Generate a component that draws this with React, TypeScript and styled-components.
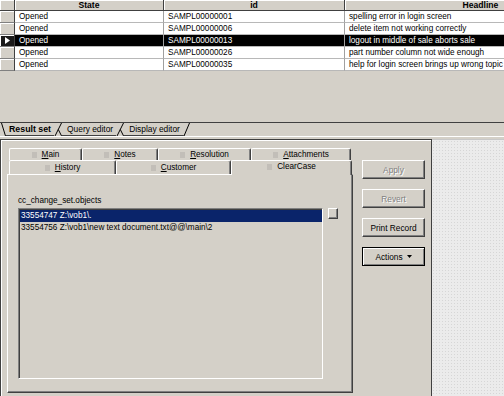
import React from 'react';
import styled, { createGlobalStyle, css } from 'styled-components';

const FACE = '#d4d0c8';
const LIGHT = '#ffffff';
const SHADOW = '#808080';
const DARK = '#404040';
const NAVY = '#0a246a';

const GlobalStyle = createGlobalStyle`
  html, body { margin: 0; padding: 0; background: ${FACE}; }
  body { font-family: "Liberation Sans", Arial, sans-serif; font-size: 8.2px; color: #000; }
  * { box-sizing: border-box; }
`;

const Window = styled.div`
  width: 504px;
  height: 396px;
  overflow: hidden;
  display: flex;
  flex-direction: column;
  background: ${FACE};
`;

/* ---------- result grid ---------- */
const GridArea = styled.div`
  height: 122px;
  overflow: hidden;
  background: ${FACE};
`;

const Grid = styled.div`
  display: grid;
  grid-template-columns: 15px 149px 181px 272px;
  grid-template-rows: 11px repeat(5, 12px);
  width: max-content;
`;

const HeaderCell = styled.div`
  background: ${FACE};
  font-weight: bold;
  font-size: 8.6px;
  text-align: center;
  line-height: 10px;
  border-right: 1px solid ${DARK};
  border-bottom: 1px solid ${DARK};
  box-shadow: inset 1px 1px 0 ${LIGHT};
  white-space: nowrap;
  overflow: hidden;
`;

const SelectorCell = styled.div<{ $current?: boolean }>`
  display: flex;
  align-items: center;
  justify-content: center;
  background: ${(p) => (p.$current ? '#1a1a1a' : FACE)};
  border-right: 1px solid ${DARK};
  border-bottom: 1px solid ${SHADOW};
  box-shadow: inset 1px 1px 0 ${LIGHT};
`;

const DataCell = styled.div<{ $selected?: boolean }>`
  background: ${(p) => (p.$selected ? '#000' : LIGHT)};
  color: ${(p) => (p.$selected ? LIGHT : '#000')};
  padding-left: 4px;
  line-height: 11px;
  border-right: 1px solid #a0a0a0;
  border-bottom: 1px solid #b8b8b8;
  white-space: nowrap;
  overflow: hidden;
`;

/* ---------- sheet tabs ---------- */
const SheetStrip = styled.div`
  height: 14px;
  border-top: 1px solid ${DARK};
  display: flex;
  padding-left: 1px;
`;

const SheetTab = styled.div<{ $active?: boolean }>`
  height: 13px;
  display: flex;
  align-items: center;
  padding: 0 3px 0 3px;
  border-bottom: 1px solid ${DARK};
  font-weight: ${(p) => (p.$active ? 'bold' : 'normal')};
  font-size: ${(p) => (p.$active ? '8.8px' : '8.4px')};
  white-space: nowrap;
`;

const StripBottom = styled.div`
  height: 3px;
  border-top: 1px solid ${LIGHT};
`;

const Edge = ({ kind }: { kind: 'start' | 'joint' | 'end' }) => {
  if (kind === 'start')
    return (
      <svg width="5" height="13" viewBox="0 0 5 13">
        <line x1="0.5" y1="0" x2="4.5" y2="13" stroke="#000" strokeWidth="1" />
      </svg>
    );
  if (kind === 'end')
    return (
      <svg width="8" height="13" viewBox="0 0 8 13">
        <line x1="0.5" y1="12.5" x2="0" y2="12.5" stroke="#000" />
        <line x1="1" y1="13" x2="6.5" y2="0" stroke="#000" strokeWidth="1" />
      </svg>
    );
  return (
    <svg width="10" height="13" viewBox="0 0 10 13">
      <line x1="1" y1="13" x2="7.5" y2="0" stroke="#000" strokeWidth="1" />
      <line x1="4.3" y1="6.5" x2="7.6" y2="13" stroke="#000" strokeWidth="1" />
      <line x1="7.6" y1="12.5" x2="10" y2="12.5" stroke={DARK} strokeWidth="1" />
    </svg>
  );
};

/* ---------- bottom area ---------- */
const BottomArea = styled.div`
  flex: 1;
  display: flex;
  min-height: 0;
`;

const FormPanel = styled.div`
  width: 432px;
  display: flex;
  padding: 8px 0 3px 6px;
  border-top: 1px solid ${DARK};
  border-left: 1px solid ${DARK};
  border-right: 1px solid ${DARK};
  box-shadow: inset 1px 1px 0 ${LIGHT};
`;

const DottedPanel = styled.div`
  flex: 1;
  border-top: 1px solid #c8c8c8;
  background-color: #ebebeb;
  background-image: radial-gradient(circle, #d6d6d6 0.7px, transparent 0.9px);
  background-size: 3px 3px;
`;

const TabControl = styled.div`
  width: 346px;
  display: flex;
  flex-direction: column;
`;

const TabRow = styled.div<{ $h: number }>`
  height: ${(p) => p.$h}px;
  display: flex;
  padding-left: 2px;
`;

const Tab = styled.div<{ $w: number; $selected?: boolean }>`
  width: ${(p) => p.$w}px;
  display: flex;
  align-items: center;
  justify-content: center;
  gap: 5px;
  background: ${FACE};
  border-top: 1px solid ${LIGHT};
  border-left: 1px solid ${LIGHT};
  border-right: 1px solid ${DARK};
  box-shadow: inset -1px 0 0 ${SHADOW};
  border-radius: 2px 2px 0 0;
  white-space: nowrap;
  ${(p) =>
    p.$selected &&
    css`
      position: relative;
      z-index: 1;
      margin-bottom: -1px;
      padding-bottom: 3px;
    `}
`;

const TabIcon = styled.span`
  width: 5px;
  height: 6px;
  background: #c2beb8;
  flex: none;
`;

const TabPage = styled.div`
  flex: 1;
  border-top: 1px solid ${LIGHT};
  border-left: 1px solid ${LIGHT};
  border-right: 1px solid ${DARK};
  border-bottom: 1px solid ${DARK};
  box-shadow: inset -1px -1px 0 ${SHADOW};
  padding: 20px 0 0 10px;
  display: flex;
  flex-direction: column;
`;

const FieldLabel = styled.div`
  height: 11px;
  line-height: 11px;
  white-space: nowrap;
`;

const FieldRow = styled.div`
  margin-top: 2px;
  display: flex;
  align-items: flex-start;
  gap: 5px;
`;

const ListBox = styled.div`
  width: 305px;
  height: 171px;
  border: 1px solid;
  border-color: ${SHADOW} ${LIGHT} ${LIGHT} ${SHADOW};
  box-shadow: inset 1px 1px 0 ${DARK};
  padding: 1px 0 0 1px;
  background: ${FACE};
`;

const ListItem = styled.div<{ $selected?: boolean }>`
  height: 12px;
  line-height: 12px;
  padding-left: 1px;
  white-space: nowrap;
  background: ${(p) => (p.$selected ? NAVY : 'transparent')};
  color: ${(p) => (p.$selected ? LIGHT : '#000')};
`;

const MiniButton = styled.div`
  width: 10px;
  height: 11px;
  background: ${FACE};
  border: 1px solid;
  border-color: ${LIGHT} ${DARK} ${DARK} ${LIGHT};
  box-shadow: inset -1px -1px 0 ${SHADOW};
`;

const ButtonColumn = styled.div`
  display: flex;
  flex-direction: column;
  gap: 10px;
  padding: 12px 0 0 9px;
`;

const Button = styled.div<{ $disabled?: boolean; $default?: boolean }>`
  width: 63px;
  height: 19px;
  display: flex;
  align-items: center;
  justify-content: center;
  gap: 4px;
  background: ${FACE};
  border: 1px solid;
  border-color: ${LIGHT} ${DARK} ${DARK} ${LIGHT};
  box-shadow: inset -1px -1px 0 ${SHADOW};
  font-size: 8.3px;
  white-space: nowrap;
  color: ${(p) => (p.$disabled ? SHADOW : '#000')};
  text-shadow: ${(p) => (p.$disabled ? `1px 1px 0 ${LIGHT}` : 'none')};
  ${(p) =>
    p.$default &&
    css`
      outline: 1px solid #000;
      outline-offset: -1px;
      border-color: #000;
      box-shadow: inset 1px 1px 0 ${LIGHT}, inset -1px -1px 0 ${SHADOW};
    `}
`;

const rows = [
  { id: 'SAMPL00000001', headline: 'spelling error in login screen' },
  { id: 'SAMPL00000006', headline: 'delete item not working correctly' },
  { id: 'SAMPL00000013', headline: 'logout in middle of sale aborts sale', selected: true },
  { id: 'SAMPL00000026', headline: 'part number column not wide enough' },
  { id: 'SAMPL00000035', headline: 'help for login screen brings up wrong topic' },
];

const Mn = ({ text, u = true }: { text: string; u?: boolean }) =>
  u ? (
    <span>
      <u>{text[0]}</u>
      {text.slice(1)}
    </span>
  ) : (
    <span>{text}</span>
  );

export default function App() {
  return (
    <>
      <GlobalStyle />
      <Window>
        <GridArea>
          <Grid>
            <HeaderCell />
            <HeaderCell>State</HeaderCell>
            <HeaderCell>id</HeaderCell>
            <HeaderCell>Headline</HeaderCell>
            {rows.map((r) => (
              <React.Fragment key={r.id}>
                <SelectorCell $current={r.selected}>
                  {r.selected && (
                    <svg width="5" height="7" viewBox="0 0 5 7">
                      <path d="M0 0 L5 3.5 L0 7 Z" fill="#fff" />
                    </svg>
                  )}
                </SelectorCell>
                <DataCell $selected={r.selected}>Opened</DataCell>
                <DataCell $selected={r.selected}>{r.id}</DataCell>
                <DataCell $selected={r.selected}>{r.headline}</DataCell>
              </React.Fragment>
            ))}
          </Grid>
        </GridArea>

        <SheetStrip>
          <Edge kind="start" />
          <SheetTab $active>Result set</SheetTab>
          <Edge kind="joint" />
          <SheetTab>Query editor</SheetTab>
          <Edge kind="joint" />
          <SheetTab>Display editor</SheetTab>
          <Edge kind="end" />
        </SheetStrip>
        <StripBottom />

        <BottomArea>
          <FormPanel>
            <TabControl>
              <TabRow $h={12}>
                <Tab $w={73}><TabIcon /><Mn text="Main" /></Tab>
                <Tab $w={76}><TabIcon /><Mn text="Notes" /></Tab>
                <Tab $w={93}><TabIcon /><Mn text="Resolution" /></Tab>
                <Tab $w={100}><TabIcon /><Mn text="Attachments" /></Tab>
              </TabRow>
              <TabRow $h={14}>
                <Tab $w={107}><TabIcon /><Mn text="History" /></Tab>
                <Tab $w={115}><TabIcon /><Mn text="Customer" /></Tab>
                <Tab $w={121} $selected><TabIcon /><Mn text="ClearCase" u={false} /></Tab>
              </TabRow>
              <TabPage>
                <FieldLabel>cc_change_set.objects</FieldLabel>
                <FieldRow>
                  <ListBox>
                    <ListItem $selected>33554747 Z:\vob1\.</ListItem>
                    <ListItem>33554756 Z:\vob1\new text document.txt@@\main\2</ListItem>
                  </ListBox>
                  <MiniButton />
                </FieldRow>
              </TabPage>
            </TabControl>
            <ButtonColumn>
              <Button $disabled>Apply</Button>
              <Button $disabled>Revert</Button>
              <Button>Print Record</Button>
              <Button $default>
                Actions
                <svg width="5" height="3" viewBox="0 0 5 3">
                  <path d="M0 0 H5 L2.5 3 Z" fill="#000" />
                </svg>
              </Button>
            </ButtonColumn>
          </FormPanel>
          <DottedPanel />
        </BottomArea>
      </Window>
    </>
  );
}
